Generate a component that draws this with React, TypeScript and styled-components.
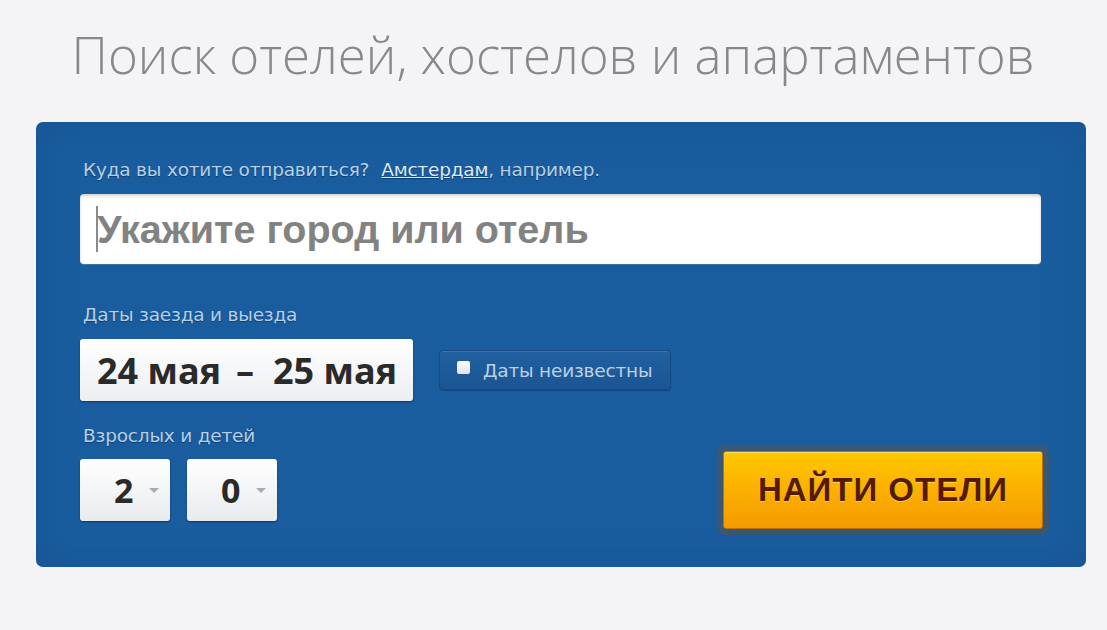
import React from "react";
import styled, { createGlobalStyle } from "styled-components";

const GlobalStyle = createGlobalStyle`
  html, body { margin: 0; padding: 0; background: #f4f4f6; }
  body { width: 1107px; height: 630px; overflow: hidden; }
`;

const Page = styled.div`
  padding: 20px 21px 0 36px;
  display: flex;
  flex-direction: column;
`;

const Title = styled.h1`
  margin: 0 0 34px -16px;
  font-family: "Open Sans", sans-serif;
  font-weight: 300;
  font-size: 51px;
  line-height: 68px;
  color: #88888a;
  text-align: center;
`;

const Panel = styled.div`
  width: 1050px;
  box-sizing: border-box;
  background: #1a5d9e;
  border-radius: 7px;
  padding: 38px 45px 38px 44px;
  display: flex;
  flex-direction: column;
  box-shadow: inset 0 0 40px rgba(10, 50, 100, 0.2);
`;

const Label = styled.div<{ $gap?: number }>`
  font-family: "DejaVu Sans", Verdana, sans-serif;
  font-size: 18.5px;
  line-height: 20px;
  color: #b7cfe6;
  text-shadow: 0 1px 1px rgba(0, 30, 70, 0.5);
  margin: 0 0 ${(p) => p.$gap ?? 14}px 3px;
  letter-spacing: -0.2px;
`;

const ExampleLink = styled.a`
  color: #dde8f4;
  text-decoration: underline;
  margin-left: 12px;
`;

const SearchField = styled.div`
  height: 70px;
  background: #ffffff;
  border-radius: 4px;
  box-shadow: inset 0 2px 3px rgba(0, 0, 0, 0.18), 0 1px 0 rgba(255, 255, 255, 0.15);
  display: flex;
  align-items: center;
  padding-left: 16px;
  margin-bottom: 41px;
`;

const Caret = styled.span`
  width: 2px;
  height: 46px;
  background: #8a8a8a;
  margin-right: -1px;
  flex: none;
`;

const Placeholder = styled.span`
  font-family: "Liberation Sans", Arial, sans-serif;
  font-weight: 700;
  font-size: 39.5px;
  color: #828282;
`;

const DatesRow = styled.div`
  display: flex;
  align-items: center;
  gap: 26px;
  margin-bottom: 25px;
`;

const DateBox = styled.div`
  width: 333px;
  height: 62px;
  box-sizing: border-box;
  background: linear-gradient(#ffffff, #eceef1);
  border-radius: 3px;
  box-shadow: 0 1px 2px rgba(0, 20, 50, 0.5);
  display: flex;
  align-items: center;
  padding-left: 17px;
  font-family: "Open Sans", sans-serif;
  font-weight: 700;
  font-size: 36px;
  color: #2a2a2a;
  white-space: pre;
`;

const Dash = styled.span`
  margin: 0 19px 0 15px;
`;

const UnknownButton = styled.div`
  width: 232px;
  height: 40px;
  box-sizing: border-box;
  background: linear-gradient(#2060a0, #1b5593);
  border: 1px solid #164a82;
  border-radius: 4px;
  box-shadow: inset 0 1px 0 rgba(255, 255, 255, 0.12), 0 1px 1px rgba(0, 20, 50, 0.3);
  display: flex;
  align-items: center;
  padding-left: 17px;
  gap: 13px;
  font-family: "DejaVu Sans", Verdana, sans-serif;
  font-size: 18.5px;
  letter-spacing: -0.2px;
  color: #bcd1e7;
`;

const CheckBox = styled.span`
  width: 13px;
  height: 13px;
  background: linear-gradient(#ffffff, #dfe3e8);
  border-radius: 2px;
  margin-top: -5px;
  flex: none;
`;

const BottomRow = styled.div`
  display: flex;
  align-items: flex-end;
  justify-content: space-between;
`;

const Guests = styled.div`
  display: flex;
  flex-direction: column;
`;

const SelectRow = styled.div`
  display: flex;
  align-items: center;
  gap: 17px;
  height: 78px;
`;

const SelectBox = styled.div`
  width: 90px;
  height: 62px;
  box-sizing: border-box;
  background: linear-gradient(#ffffff, #e8ebee);
  border-radius: 3px;
  box-shadow: 0 1px 2px rgba(0, 20, 50, 0.5);
  display: flex;
  align-items: center;
  padding-left: 34px;
  gap: 16px;
  font-family: "Open Sans", sans-serif;
  font-weight: 700;
  font-size: 34px;
  color: #2a2a2a;
`;

const Arrow = styled.span`
  width: 0;
  height: 0;
  border-left: 5px solid transparent;
  border-right: 5px solid transparent;
  border-top: 5px solid #a9adb2;
`;

const FindButton = styled.button`
  width: 320px;
  height: 78px;
  margin-right: -2px;
  border: 1px solid #c07000;
  border-radius: 3px;
  background: linear-gradient(#ffc800, #fbb000 50%, #f49a00);
  box-shadow: 0 0 0 6px rgba(70, 85, 100, 0.75), inset 0 1px 0 rgba(255, 240, 160, 0.6);
  font-family: "Liberation Sans", Arial, sans-serif;
  font-weight: 700;
  font-size: 33px;
  letter-spacing: 1px;
  color: #561a00;
  text-shadow: 0 1px 0 rgba(255, 225, 140, 0.7);
  cursor: pointer;
  padding: 0;
`;

export default function App() {
  return (
    <>
      <GlobalStyle />
      <Page>
        <Title>Поиск отелей, хостелов и апартаментов</Title>
        <Panel>
          <Label>
            Куда вы хотите отправиться?
            <ExampleLink>Амстердам</ExampleLink>, например.
          </Label>
          <SearchField>
            <Caret />
            <Placeholder>Укажите город или отель</Placeholder>
          </SearchField>
          <Label>Даты заезда и выезда</Label>
          <DatesRow>
            <DateBox>
              24 мая<Dash>–</Dash>25 мая
            </DateBox>
            <UnknownButton>
              <CheckBox />
              Даты неизвестны
            </UnknownButton>
          </DatesRow>
          <BottomRow>
            <Guests>
              <Label $gap={5}>Взрослых и детей</Label>
              <SelectRow>
                <SelectBox>
                  2<Arrow />
                </SelectBox>
                <SelectBox>
                  0<Arrow />
                </SelectBox>
              </SelectRow>
            </Guests>
            <FindButton>НАЙТИ ОТЕЛИ</FindButton>
          </BottomRow>
        </Panel>
      </Page>
    </>
  );
}
